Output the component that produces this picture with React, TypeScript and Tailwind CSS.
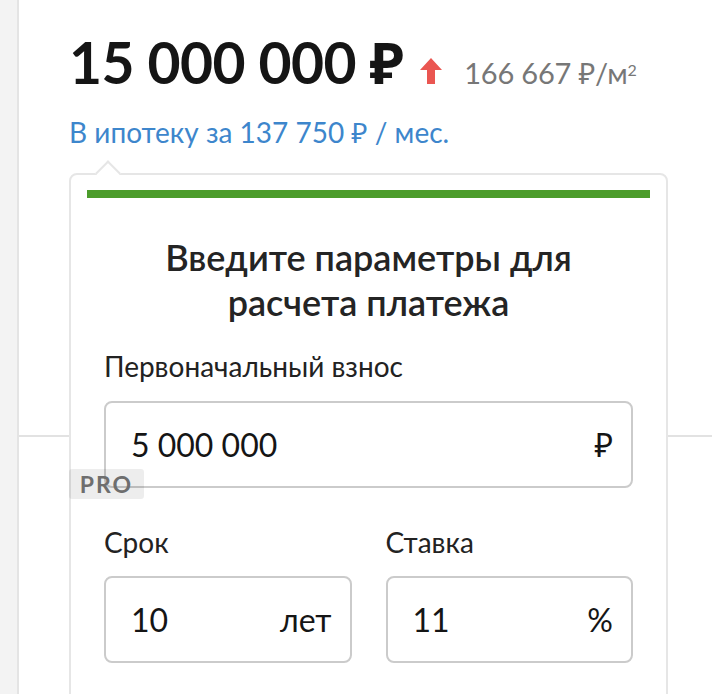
function Field({ value, unit, className }: { value: string; unit: string; className?: string }) {
    return (
        <div
            className={
                "relative z-10 flex h-[87px] items-center justify-between rounded-[8px] border-2 border-[#cbcbcb] pl-[25px] pr-[18px] text-[32px] text-[#151515] " +
                (className ?? "")
            }
        >
            <span>{value}</span>
            <span>{unit}</span>
        </div>
    );
}

function UpArrow() {
    return (
        <svg viewBox="0 0 22 26" className="mb-[3px] ml-[17px] h-[26px] w-[22px]">
            <polygon points="11,0 22,12 15,12 15,26 7,26 7,12 0,12" fill="#ea5651" />
        </svg>
    );
}

export default function App() {
    return (
        <div className="flex h-[694px] w-[712px] overflow-hidden bg-white font-['Lato','Noto_Sans',sans-serif]">
            <div className="w-[19px] shrink-0 border-r-2 border-[#e4e4e4] bg-[#f3f3f3]" />

            <main className="relative flex-1 pl-[50px]">
                {/* divider of the page below, sits behind the popup */}
                <div className="absolute left-0 right-0 top-[435px] h-[2px] bg-[#e2e2e2]" />

                <div className="flex items-baseline pt-[29px]">
                    <h1 className="text-[57px] font-bold leading-[66px] tracking-[-0.5px] text-[#151515]">15 000 000 ₽</h1>
                    <UpArrow />
                    <span className="ml-[22px] text-[29px] tracking-[-0.2px] text-[#777]">
                        166 667 ₽/м<sup className="text-[16px]">2</sup>
                    </span>
                </div>

                <a className="mt-[20px] block text-[28px] leading-[34px] text-[#3d86cc]">В ипотеку за 137 750 ₽ / мес.</a>

                <section className="relative z-10 mt-[24px] w-[599px] rounded-[8px] border-2 border-[#e6e6e6] bg-white px-4 pt-[15px] pb-10">
                    <div className="absolute -top-[11px] left-[28px] h-[18px] w-[18px] rotate-45 border-l-2 border-t-2 border-[#e6e6e6] bg-white" />
                    <div className="relative h-2 bg-[#4c9c2b]" />

                    <div className="px-[17px]">
                        <h2 className="mt-[37px] text-center text-[36px] font-semibold leading-[45px] text-[#242424]">
                            Введите параметры для
                            <br />
                            расчета платежа
                        </h2>

                        <p className="mt-[24px] text-[28px] leading-[34px] text-[#222]">Первоначальный взнос</p>
                        <div className="relative mt-[18px]">
                            <Field value="5 000 000" unit="₽" />
                            <span className="absolute -left-[35px] top-[68px] z-20 flex h-[30px] w-[75px] items-center justify-center rounded-[3px] bg-black/[0.07] text-[23px] font-bold tracking-[2px] text-[#6e6e6e]">
                                PRO
                            </span>
                        </div>

                        <div className="mt-[37px] grid grid-cols-2 gap-[34px]">
                            <div>
                                <p className="text-[28px] leading-[34px] text-[#222]">Срок</p>
                                <Field value="10" unit="лет" className="mt-[17px]" />
                            </div>
                            <div>
                                <p className="text-[28px] leading-[34px] text-[#222]">Ставка</p>
                                <Field value="11" unit="%" className="mt-[17px]" />
                            </div>
                        </div>
                    </div>
                </section>
            </main>
        </div>
    );
}
